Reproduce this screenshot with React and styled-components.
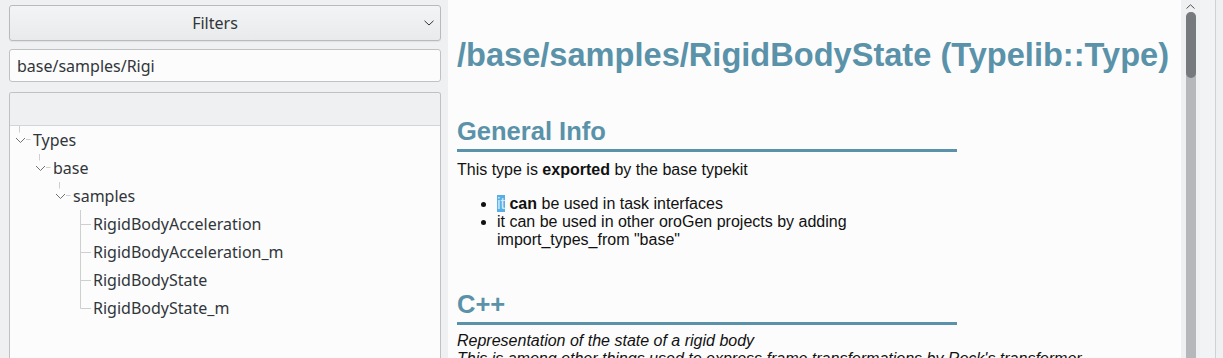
import React from "react";
import styled, { createGlobalStyle } from "styled-components";

const GlobalStyle = createGlobalStyle`
  html, body { margin: 0; padding: 0; overflow: hidden; background: #eff0f1; }
  * { box-sizing: border-box; }
`;

const Window = styled.div`
  display: flex;
  width: 1223px;
  height: 358px;
  overflow: hidden;
  background: #eff0f1;
`;

const Sidebar = styled.div`
  width: 448px;
  flex: none;
  display: flex;
  flex-direction: column;
  padding: 5px 7px 0 9px;
  font-family: "Noto Sans", sans-serif;
  font-size: 16px;
  color: #31363b;
`;

const Combo = styled.div`
  position: relative;
  height: 36px;
  border: 1px solid #b8babc;
  border-radius: 3px;
  background: linear-gradient(#f3f4f5, #e9eaeb);
  box-shadow: 0 1px 1px rgba(0, 0, 0, 0.06);
  display: flex;
  align-items: center;
  padding-right: 20px;
`;

const ComboText = styled.span`
  flex: 1;
  text-align: center;
  line-height: 34px;
`;

const ComboArrow = styled.svg`
  position: absolute;
  right: 6px;
  top: 14px;
`;

const LineEdit = styled.div`
  margin-top: 8px;
  height: 33px;
  border: 1px solid #bfc1c3;
  border-radius: 3px;
  background: #fcfcfc;
  padding: 1px 7px 0;
  line-height: 30px;
`;

const TreeBox = styled.div`
  margin-top: 10px;
  flex: 1;
  border: 1px solid #bfc1c3;
  border-bottom: none;
  border-radius: 3px 3px 0 0;
  background: #fcfcfc;
  overflow: hidden;
`;

const TreeHeader = styled.div`
  height: 33px;
  background: #eff0f1;
  border-bottom: 1px solid #d3d5d6;
`;

const Row = styled.div`
  display: flex;
  height: 28px;
  line-height: 28px;
  padding-left: ${(p) => 3 + p.$depth * 20}px;
  white-space: nowrap;
`;

const Connector = styled.svg`
  flex: none;
  width: 20px;
  height: 28px;
`;

const Viewer = styled.div`
  flex: 1;
  background: #fcfcfc;
  padding: 36px 0 0 9px;
  font-family: "Liberation Sans", Arial, sans-serif;
  font-size: 16px;
  color: #111;
  overflow: hidden;
`;

const Title = styled.h1`
  margin: 0;
  font-size: 32.6px;
  line-height: 37px;
  font-weight: bold;
  color: #5a92a9;
  white-space: nowrap;
`;

const Section = styled.h2`
  width: 500px;
  margin: ${(p) => p.$top}px 0 0;
  padding-bottom: 3px;
  border-bottom: 3px solid #5a92a9;
  font-size: 25.5px;
  line-height: 30px;
  font-weight: bold;
  color: #5a92a9;
`;

const Para = styled.p`
  margin: ${(p) => p.$top}px 0 0;
  line-height: 18px;
  font-style: ${(p) => (p.$italic ? "italic" : "normal")};
`;

const List = styled.ul`
  margin: 16px 0 0;
  padding-left: 40px;
  line-height: 18px;
`;

const Selected = styled.span`
  background: #5aaee6;
  color: #d4ebf9;
`;

const Scrollbar = styled.div`
  width: 19px;
  flex: none;
  background: #eff0f1;
  display: flex;
  flex-direction: column;
  align-items: center;
  padding-top: 4px;
`;

const Track = styled.div`
  margin-top: 3px;
  width: 10px;
  flex: 1;
  border-radius: 5px 5px 0 0;
  background: #b5b7bb;
  display: flex;
  flex-direction: column;
`;

const Thumb = styled.div`
  height: 66px;
  border-radius: 5px;
  background: #767a7f;
`;

const EdgeStrip = styled.div`
  width: 23px;
  flex: none;
  display: flex;
`;

const EdgePanel = styled.div`
  width: 16px;
  background: #f2f3f4;
  border-right: 1px solid #cfd1d3;
`;

const tree = [
  { label: "Types", depth: 0, branch: true },
  { label: "base", depth: 1, branch: true },
  { label: "samples", depth: 2, branch: true },
  { label: "RigidBodyAcceleration", depth: 3 },
  { label: "RigidBodyAcceleration_m", depth: 3 },
  { label: "RigidBodyState", depth: 3 },
  { label: "RigidBodyState_m", depth: 3, last: true },
];

function BranchLines({ branch, last }) {
  if (branch) {
    return (
      <Connector viewBox="0 0 20 28">
        <line x1="6.5" y1="0" x2="6.5" y2="6.5" stroke="#cdcfd1" />
        <polyline points="3,12 7.5,16.5 12,12" fill="none" stroke="#6e7276" strokeWidth="1" />
        <line x1="13" y1="13.5" x2="17.5" y2="13.5" stroke="#cdcfd1" />
      </Connector>
    );
  }
  return (
    <Connector viewBox="0 0 20 28">
      <line x1="7.5" y1="0" x2="7.5" y2={last ? 14.5 : 28} stroke="#cdcfd1" />
      <line x1="7.5" y1="14.5" x2="18" y2="14.5" stroke="#cdcfd1" />
    </Connector>
  );
}

export default function App() {
  return (
    <Window>
      <GlobalStyle />
      <Sidebar>
        <Combo>
          <ComboText>Filters</ComboText>
          <ComboArrow width="10" height="6" viewBox="0 0 10 6">
            <polyline points="0.5,0.8 5,5 9.5,0.8" fill="none" stroke="#31363b" strokeWidth="1" />
          </ComboArrow>
        </Combo>
        <LineEdit>base/samples/Rigi</LineEdit>
        <TreeBox>
          <TreeHeader />
          {tree.map((item) => (
            <Row key={item.label} $depth={item.depth}>
              <BranchLines branch={item.branch} last={item.last} />
              {item.label}
            </Row>
          ))}
        </TreeBox>
      </Sidebar>
      <Viewer>
        <Title>/base/samples/RigidBodyState (Typelib::Type)</Title>
        <Section $top={43}>General Info</Section>
        <Para $top={9}>
          This type is <b>exported</b> by the base typekit
        </Para>
        <List>
          <li>
            <Selected>it</Selected> <b>can</b> be used in task interfaces
          </li>
          <li>
            it can be used in other oroGen projects by adding
            <br />
            import_types_from "base"
          </li>
        </List>
        <Section $top={40}>C++</Section>
        <Para $top={7} $italic>
          Representation of the state of a rigid body
          <br />
          This is among other things used to express frame transformations by Rock's transformer
        </Para>
      </Viewer>
      <Scrollbar>
        <svg width="9" height="5" viewBox="0 0 9 5">
          <polyline points="0.5,4.5 4.5,0.8 8.5,4.5" fill="none" stroke="#4d5155" strokeWidth="1" />
        </svg>
        <Track>
          <Thumb />
        </Track>
      </Scrollbar>
      <EdgeStrip>
        <EdgePanel />
      </EdgeStrip>
    </Window>
  );
}
